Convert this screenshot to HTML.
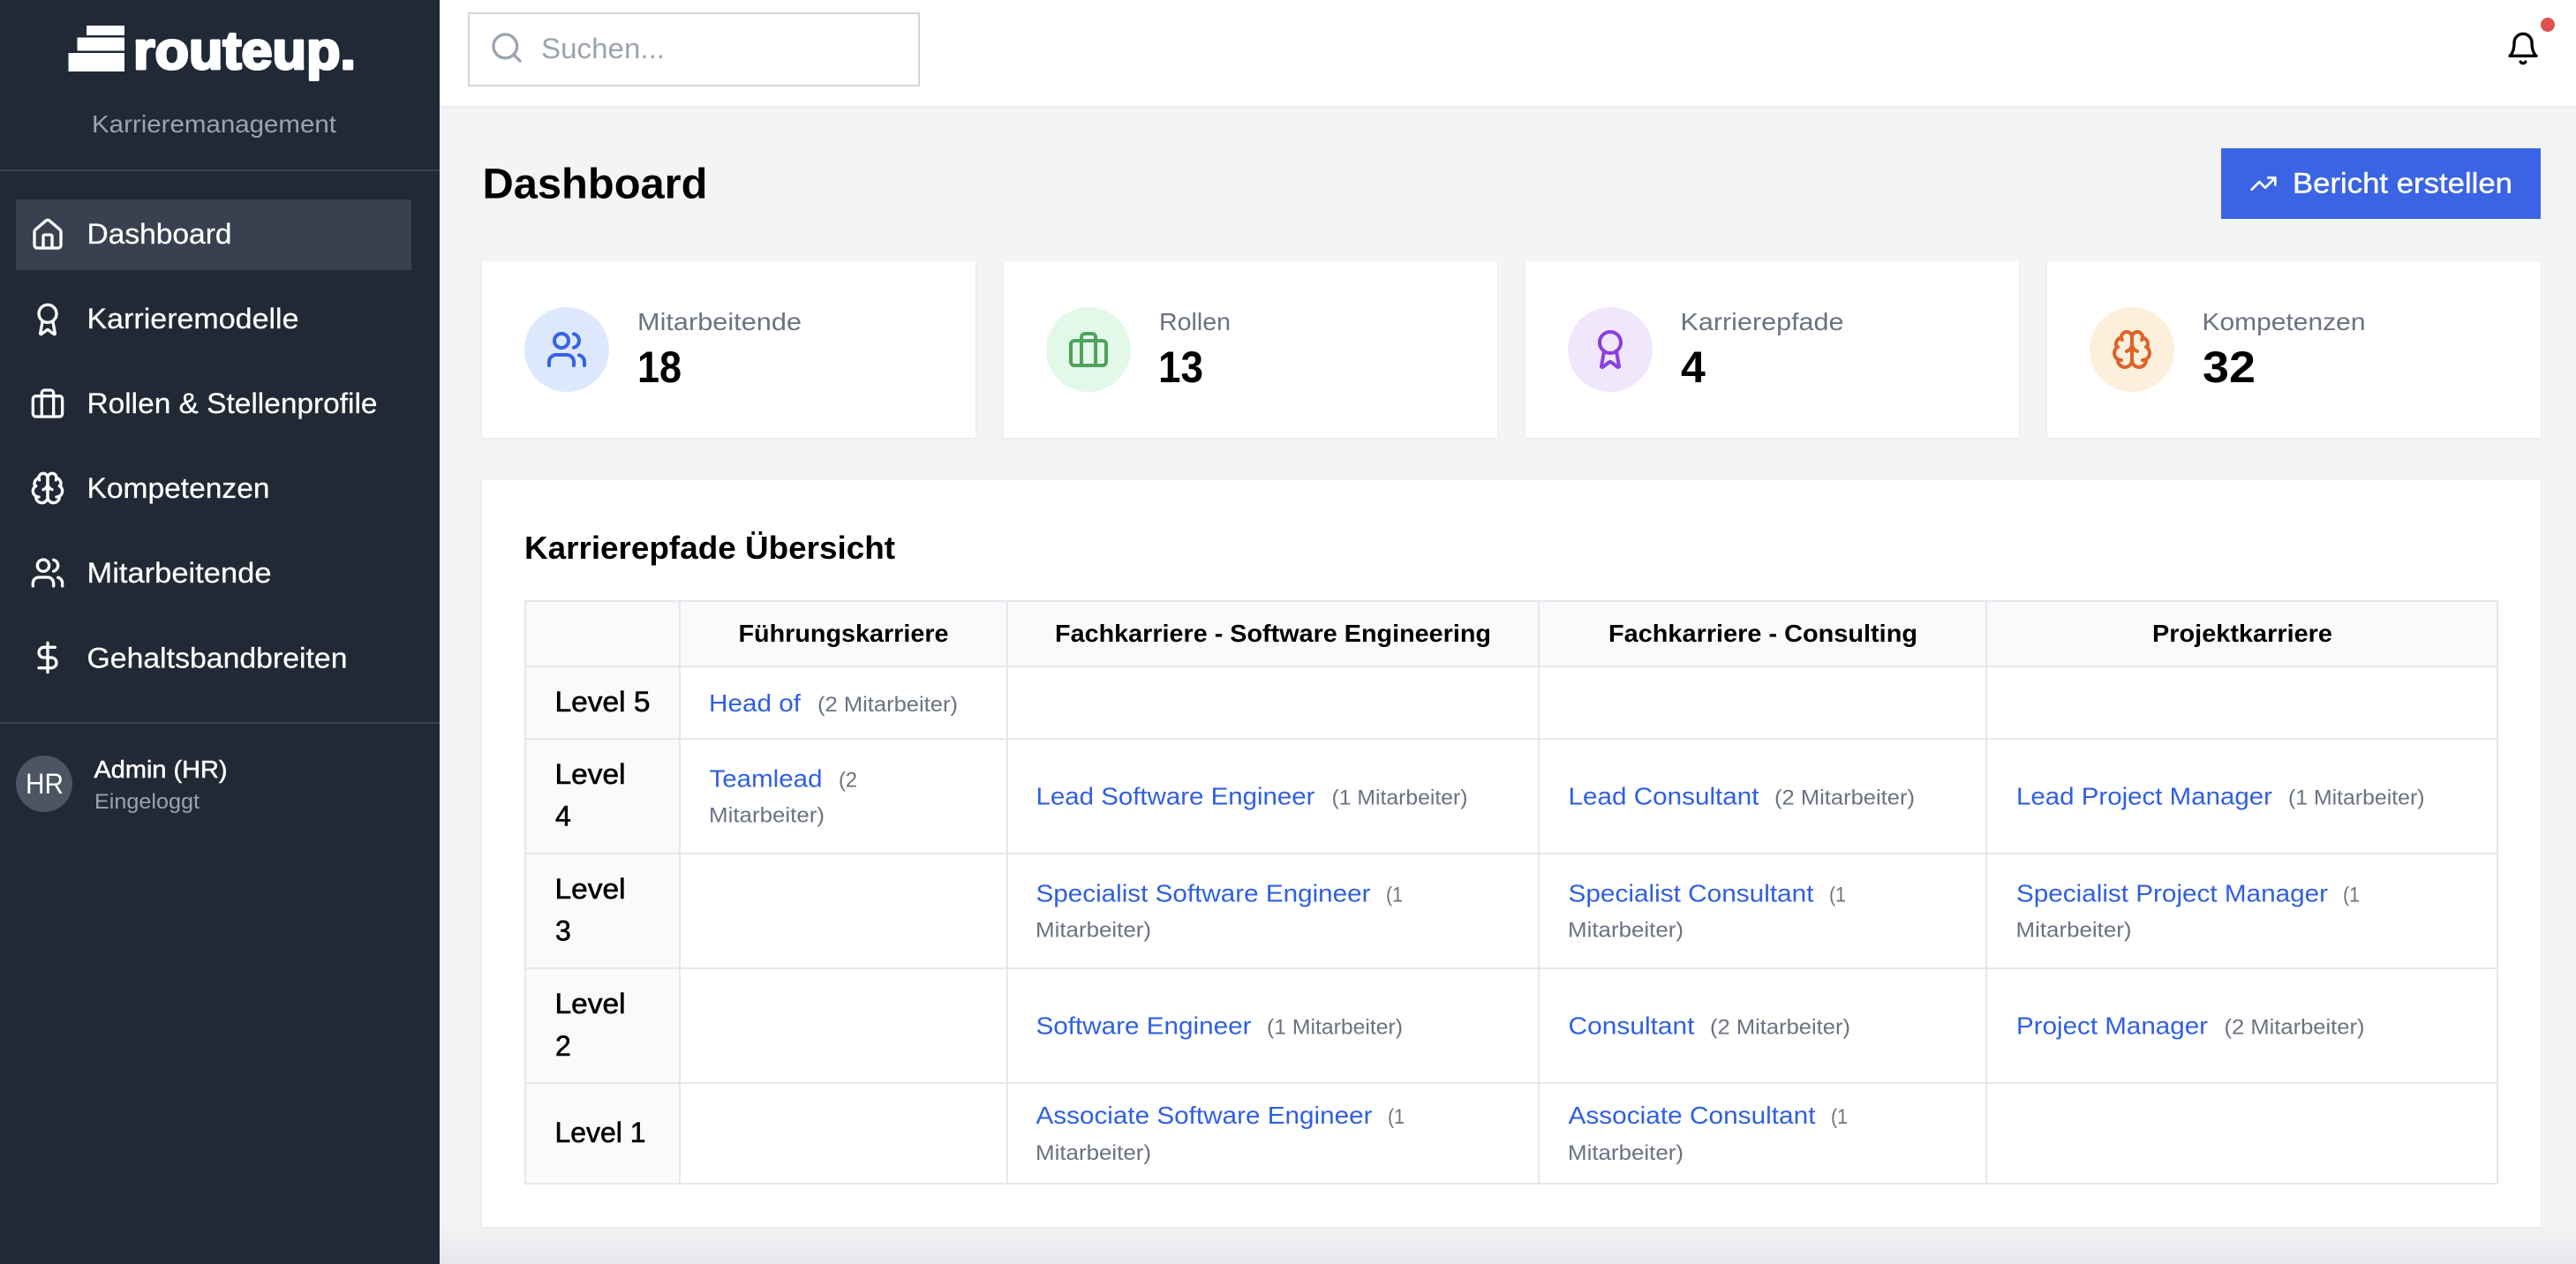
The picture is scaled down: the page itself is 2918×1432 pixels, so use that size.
<!DOCTYPE html>
<html lang="de">
<head>
<meta charset="utf-8">
<title>routeup. Dashboard</title>
<style>
html,body{margin:0;padding:0;width:2918px;height:1432px;overflow:hidden;background:#f3f4f6;}
#app{position:relative;width:2918px;height:1432px;overflow:hidden;background:#f3f4f6;}
.box{position:absolute;}
.side{left:0;top:0;width:498px;height:1432px;background:#212936;}
.head{left:498px;top:0;width:2420px;height:120px;background:#fff;box-shadow:0 1px 4px rgba(0,0,0,.06);}
.card{background:#fff;box-shadow:0 1px 3px rgba(0,0,0,.07);}
.bottom{left:498px;top:1388px;width:2420px;height:44px;background:linear-gradient(#f2f3f5,#e6e7ea);}
svg.layer{position:absolute;left:0;top:0;}
text{font-family:"Liberation Sans",Arial,sans-serif;}
.nav{font-size:32px;fill:#fff;stroke:#fff;stroke-width:.25px;}
.lab{font-size:28px;fill:#6b7280;}
.num{font-size:50px;font-weight:700;fill:#000;}
.th{font-size:28px;font-weight:700;fill:#000;}
.lv{font-size:32px;fill:#000;stroke:#000;stroke-width:.6px;}
.lk{font-size:28px;fill:#2f5fe3;}
.ct{font-size:24px;fill:#6b7280;}
.ic{fill:none;stroke-linecap:round;stroke-linejoin:round;}
</style>
</head>
<body>
<div id="app">
  <div class="box bottom"></div>
  <div class="box side"></div>
  <div class="box head"></div>
  <div class="box card" style="left:546px;top:296px;width:559px;height:200px"></div>
  <div class="box card" style="left:1137px;top:296px;width:559px;height:200px"></div>
  <div class="box card" style="left:1728px;top:296px;width:559px;height:200px"></div>
  <div class="box card" style="left:2319px;top:296px;width:559px;height:200px"></div>
  <div class="box card" style="left:546px;top:544px;width:2332px;height:846px"></div>

<svg class="layer" width="2918" height="1432" viewBox="0 0 2918 1432" xmlns="http://www.w3.org/2000/svg">
  <defs>
    <symbol id="i-house" viewBox="0 0 24 24"><path d="M15 21v-8a1 1 0 0 0-1-1h-4a1 1 0 0 0-1 1v8"/><path d="M3 10a2 2 0 0 1 .709-1.528l7-5.999a2 2 0 0 1 2.582 0l7 5.999A2 2 0 0 1 21 10v9a2 2 0 0 1-2 2H5a2 2 0 0 1-2-2z"/></symbol>
    <symbol id="i-award" viewBox="0 0 24 24"><path d="m15.477 12.89 1.515 8.526a.5.5 0 0 1-.81.47l-3.58-2.687a1 1 0 0 0-1.197 0l-3.586 2.686a.5.5 0 0 1-.81-.469l1.514-8.526"/><circle cx="12" cy="8" r="6"/></symbol>
    <symbol id="i-brief" viewBox="0 0 24 24"><rect x="2" y="7" width="20" height="14" rx="2" ry="2"/><path d="M16 21V5a2 2 0 0 0-2-2h-4a2 2 0 0 0-2 2v16"/></symbol>
    <symbol id="i-brain" viewBox="0 0 24 24"><path d="M12 5a3 3 0 1 0-5.997.125 4 4 0 0 0-2.526 5.77 4 4 0 0 0 .556 6.588A4 4 0 1 0 12 18Z"/><path d="M12 5a3 3 0 1 1 5.997.125 4 4 0 0 1 2.526 5.77 4 4 0 0 1-.556 6.588A4 4 0 1 1 12 18Z"/><path d="M15 13a4.5 4.5 0 0 1-3-4 4.5 4.5 0 0 1-3 4"/><path d="M17.599 6.5a3 3 0 0 0 .399-1.375"/><path d="M6.003 5.125A3 3 0 0 0 6.401 6.5"/><path d="M3.477 10.896a4 4 0 0 1 .585-.396"/><path d="M19.938 10.5a4 4 0 0 1 .585.396"/><path d="M6 18a4 4 0 0 1-1.967-.516"/><path d="M19.967 17.484A4 4 0 0 1 18 18"/></symbol>
    <symbol id="i-users" viewBox="0 0 24 24"><path d="M16 21v-2a4 4 0 0 0-4-4H6a4 4 0 0 0-4 4v2"/><circle cx="9" cy="7" r="4"/><path d="M22 21v-2a4 4 0 0 0-3-3.87"/><path d="M16 3.13a4 4 0 0 1 0 7.75"/></symbol>
    <symbol id="i-dollar" viewBox="0 0 24 24"><line x1="12" x2="12" y1="2" y2="22"/><path d="M17 5H9.5a3.5 3.5 0 0 0 0 7h5a3.5 3.5 0 0 1 0 7H6"/></symbol>
    <symbol id="i-search" viewBox="0 0 24 24"><circle cx="11" cy="11" r="8"/><path d="m21 21-4.3-4.3"/></symbol>
    <symbol id="i-bell" viewBox="0 0 24 24"><path d="M6 8a6 6 0 0 1 12 0c0 7 3 9 3 9H3s3-2 3-9"/><path d="M10.3 21a1.94 1.94 0 0 0 3.4 0"/></symbol>
    <symbol id="i-trend" viewBox="0 0 24 24"><polyline points="22 7 13.5 15.5 8.5 10.5 2 17"/><polyline points="16 7 22 7 22 13"/></symbol>
  </defs>

  <!-- Logo -->
  <rect x="98" y="29" width="43" height="11" fill="#fff"/>
  <rect x="87.5" y="42.500" width="53.5" height="15" fill="#fff"/>
  <rect x="77.5" y="60" width="63.5" height="21" fill="#fff"/>
  <text x="151" y="78" font-size="60" font-weight="700" fill="#fff" stroke="#fff" stroke-width="3" stroke-linejoin="round" textLength="252" lengthAdjust="spacingAndGlyphs">routeup.</text>
  <text x="104" y="150" font-size="28" fill="#9ca3af" textLength="277" lengthAdjust="spacingAndGlyphs">Karrieremanagement</text>
  <rect x="0" y="192" width="498" height="2" fill="#374151"/>

  <!-- Navigation -->
  <rect x="18" y="226" width="448" height="80" fill="#394150"/>
  <g class="ic" stroke="#fff" stroke-width="2">
    <use href="#i-house" x="34" y="246" width="40" height="40"/>
    <use href="#i-award" x="34" y="342" width="40" height="40"/>
    <use href="#i-brief" x="34" y="437" width="40" height="40"/>
    <use href="#i-brain" x="34" y="533" width="40" height="40"/>
    <use href="#i-users" x="34" y="629" width="40" height="40"/>
    <use href="#i-dollar" x="34" y="725" width="40" height="40"/>
  </g>
  <text class="nav" x="98.500" y="276" textLength="164" lengthAdjust="spacingAndGlyphs">Dashboard</text>
  <text class="nav" x="98.500" y="372" textLength="240" lengthAdjust="spacingAndGlyphs">Karrieremodelle</text>
  <text class="nav" x="98.500" y="468" textLength="329" lengthAdjust="spacingAndGlyphs">Rollen &amp; Stellenprofile</text>
  <text class="nav" x="98.500" y="564" textLength="207" lengthAdjust="spacingAndGlyphs">Kompetenzen</text>
  <text class="nav" x="98.500" y="660" textLength="209" lengthAdjust="spacingAndGlyphs">Mitarbeitende</text>
  <text class="nav" x="98.500" y="756.500" textLength="295" lengthAdjust="spacingAndGlyphs">Gehaltsbandbreiten</text>
  <rect x="0" y="818" width="498" height="2" fill="#374151"/>

  <circle cx="50" cy="888" r="32" fill="#4b5563"/>
  <text x="29" y="899" font-size="32" fill="#fff" textLength="43" lengthAdjust="spacingAndGlyphs">HR</text>
  <text x="106.500" y="881" font-size="28" fill="#fff" stroke="#fff" stroke-width=".5" textLength="151" lengthAdjust="spacingAndGlyphs">Admin (HR)</text>
  <text x="107" y="916" font-size="24" fill="#9ca3af" textLength="119" lengthAdjust="spacingAndGlyphs">Eingeloggt</text>

  <!-- Top bar -->
  <rect x="531" y="15" width="510" height="82" fill="#fff" stroke="#d1d5db" stroke-width="2"/>
  <use href="#i-search" x="554" y="34" width="40" height="40" class="ic" stroke="#9ca3af" stroke-width="2"/>
  <text x="613" y="66" font-size="32" fill="#9ca3af" textLength="140" lengthAdjust="spacingAndGlyphs">Suchen...</text>
  <use href="#i-bell" x="2838" y="35" width="40" height="40" class="ic" stroke="#000" stroke-width="2"/>
  <circle cx="2886" cy="28" r="8" fill="#e0524f"/>

  <!-- Page head -->
  <text x="546.500" y="224.500" font-size="48" font-weight="700" fill="#000" textLength="255" lengthAdjust="spacingAndGlyphs">Dashboard</text>
  <rect x="2516" y="168" width="362" height="80" fill="#3b64e4"/>
  <use href="#i-trend" x="2548" y="192" width="32" height="32" class="ic" stroke="#fff" stroke-width="2"/>
  <text x="2597" y="218.500" font-size="32" fill="#fff" stroke="#fff" stroke-width=".4" textLength="249" lengthAdjust="spacingAndGlyphs">Bericht erstellen</text>

  <!-- Stat cards -->
  <circle cx="642" cy="396" r="48" fill="#dde8fc"/>
  <circle cx="1233" cy="396" r="48" fill="#e2f9ea"/>
  <circle cx="1824" cy="396" r="48" fill="#f0e7fd"/>
  <circle cx="2415" cy="396" r="48" fill="#fdefdc"/>
  <use href="#i-users" x="618" y="372" width="48" height="48" class="ic" stroke="#3563e6" stroke-width="2"/>
  <use href="#i-brief" x="1209" y="372" width="48" height="48" class="ic" stroke="#4fa35a" stroke-width="2"/>
  <use href="#i-award" x="1800" y="372" width="48" height="48" class="ic" stroke="#8a3fe0" stroke-width="2"/>
  <use href="#i-brain" x="2391" y="372" width="48" height="48" class="ic" stroke="#dd6329" stroke-width="2"/>
  <text class="lab" x="722" y="374" textLength="186" lengthAdjust="spacingAndGlyphs">Mitarbeitende</text>
  <text class="lab" x="1313" y="374" textLength="81" lengthAdjust="spacingAndGlyphs">Rollen</text>
  <text class="lab" x="1903.500" y="374" textLength="185" lengthAdjust="spacingAndGlyphs">Karrierepfade</text>
  <text class="lab" x="2494.500" y="374" textLength="185" lengthAdjust="spacingAndGlyphs">Kompetenzen</text>
  <text class="num" x="722" y="433" textLength="50" lengthAdjust="spacingAndGlyphs">18</text>
  <text class="num" x="1312" y="433" textLength="51" lengthAdjust="spacingAndGlyphs">13</text>
  <text class="num" x="1904" y="433">4</text>
  <text class="num" x="2495" y="433" textLength="60" lengthAdjust="spacingAndGlyphs">32</text>

  <!-- Table card -->
  <text x="594" y="633" font-size="36" font-weight="700" fill="#000" textLength="420" lengthAdjust="spacingAndGlyphs">Karrierepfade Übersicht</text>

  <rect x="595" y="681" width="2234" height="74" fill="#f9fafb"/>
  <rect x="595" y="755" width="175" height="586" fill="#f9fafb"/>
  <g fill="#e5e7eb">
    <rect x="594" y="680" width="2236" height="2"/>
    <rect x="594" y="754" width="2236" height="2"/>
    <rect x="594" y="836" width="2236" height="2"/>
    <rect x="594" y="966" width="2236" height="2"/>
    <rect x="594" y="1096" width="2236" height="2"/>
    <rect x="594" y="1226" width="2236" height="2"/>
    <rect x="594" y="1340" width="2236" height="2"/>
    <rect x="594" y="680" width="2" height="662"/>
    <rect x="769" y="680" width="2" height="662"/>
    <rect x="1140" y="680" width="2" height="662"/>
    <rect x="1742" y="680" width="2" height="662"/>
    <rect x="2249" y="680" width="2" height="662"/>
    <rect x="2828" y="680" width="2" height="662"/>
  </g>

  <text class="th" x="836.500" y="727" textLength="238" lengthAdjust="spacingAndGlyphs">Führungskarriere</text>
  <text class="th" x="1195" y="727" textLength="494" lengthAdjust="spacingAndGlyphs">Fachkarriere - Software Engineering</text>
  <text class="th" x="1822" y="727" textLength="350" lengthAdjust="spacingAndGlyphs">Fachkarriere - Consulting</text>
  <text class="th" x="2438" y="727" textLength="204" lengthAdjust="spacingAndGlyphs">Projektkarriere</text>

  <text class="lv" x="628.500" y="806" textLength="108" lengthAdjust="spacingAndGlyphs">Level 5</text>
  <text class="lv" x="628.500" y="888" textLength="80" lengthAdjust="spacingAndGlyphs">Level</text><text class="lv" x="629" y="935.500">4</text>
  <text class="lv" x="628.500" y="1018" textLength="80" lengthAdjust="spacingAndGlyphs">Level</text><text class="lv" x="629" y="1065.500">3</text>
  <text class="lv" x="628.500" y="1148" textLength="80" lengthAdjust="spacingAndGlyphs">Level</text><text class="lv" x="629" y="1196">2</text>
  <text class="lv" x="628.500" y="1294" textLength="103" lengthAdjust="spacingAndGlyphs">Level 1</text>

  <!-- Column 1 -->
  <text class="lk" x="803" y="806" textLength="104" lengthAdjust="spacingAndGlyphs">Head of</text>
  <text class="ct" x="926" y="806" textLength="159" lengthAdjust="spacingAndGlyphs">(2 Mitarbeiter)</text>
  <text class="lk" x="803.500" y="891.500" textLength="128" lengthAdjust="spacingAndGlyphs">Teamlead</text>
  <text class="ct" x="950" y="891.500" textLength="21" lengthAdjust="spacingAndGlyphs">(2</text>
  <text class="ct" x="803" y="931.500" textLength="131" lengthAdjust="spacingAndGlyphs">Mitarbeiter)</text>

  <!-- Column 2 -->
  <text class="lk" x="1173.500" y="911.500" textLength="316" lengthAdjust="spacingAndGlyphs">Lead Software Engineer</text>
  <text class="ct" x="1508.500" y="911.500" textLength="154" lengthAdjust="spacingAndGlyphs">(1 Mitarbeiter)</text>
  <text class="lk" x="1173.500" y="1021.500" textLength="379" lengthAdjust="spacingAndGlyphs">Specialist Software Engineer</text>
  <text class="ct" x="1570" y="1021.500" textLength="19" lengthAdjust="spacingAndGlyphs">(1</text>
  <text class="ct" x="1173" y="1061.500" textLength="131" lengthAdjust="spacingAndGlyphs">Mitarbeiter)</text>
  <text class="lk" x="1173.500" y="1171.500" textLength="244" lengthAdjust="spacingAndGlyphs">Software Engineer</text>
  <text class="ct" x="1435" y="1171.500" textLength="154" lengthAdjust="spacingAndGlyphs">(1 Mitarbeiter)</text>
  <text class="lk" x="1173.500" y="1273" textLength="381" lengthAdjust="spacingAndGlyphs">Associate Software Engineer</text>
  <text class="ct" x="1572" y="1273" textLength="19" lengthAdjust="spacingAndGlyphs">(1</text>
  <text class="ct" x="1173" y="1314" textLength="131" lengthAdjust="spacingAndGlyphs">Mitarbeiter)</text>

  <!-- Column 3 -->
  <text class="lk" x="1776.500" y="911.500" textLength="216" lengthAdjust="spacingAndGlyphs">Lead Consultant</text>
  <text class="ct" x="2010" y="911.500" textLength="159" lengthAdjust="spacingAndGlyphs">(2 Mitarbeiter)</text>
  <text class="lk" x="1776.500" y="1021.500" textLength="278" lengthAdjust="spacingAndGlyphs">Specialist Consultant</text>
  <text class="ct" x="2072" y="1021.500" textLength="19" lengthAdjust="spacingAndGlyphs">(1</text>
  <text class="ct" x="1776" y="1061.500" textLength="131" lengthAdjust="spacingAndGlyphs">Mitarbeiter)</text>
  <text class="lk" x="1776.500" y="1171.500" textLength="143" lengthAdjust="spacingAndGlyphs">Consultant</text>
  <text class="ct" x="1937" y="1171.500" textLength="159" lengthAdjust="spacingAndGlyphs">(2 Mitarbeiter)</text>
  <text class="lk" x="1776.500" y="1273" textLength="280" lengthAdjust="spacingAndGlyphs">Associate Consultant</text>
  <text class="ct" x="2074" y="1273" textLength="19" lengthAdjust="spacingAndGlyphs">(1</text>
  <text class="ct" x="1776" y="1314" textLength="131" lengthAdjust="spacingAndGlyphs">Mitarbeiter)</text>

  <!-- Column 4 -->
  <text class="lk" x="2284" y="911.500" textLength="290" lengthAdjust="spacingAndGlyphs">Lead Project Manager</text>
  <text class="ct" x="2592" y="911.500" textLength="154.500" lengthAdjust="spacingAndGlyphs">(1 Mitarbeiter)</text>
  <text class="lk" x="2284" y="1021.500" textLength="353" lengthAdjust="spacingAndGlyphs">Specialist Project Manager</text>
  <text class="ct" x="2654" y="1021.500" textLength="19" lengthAdjust="spacingAndGlyphs">(1</text>
  <text class="ct" x="2283.500" y="1061.500" textLength="131" lengthAdjust="spacingAndGlyphs">Mitarbeiter)</text>
  <text class="lk" x="2284" y="1171.500" textLength="217" lengthAdjust="spacingAndGlyphs">Project Manager</text>
  <text class="ct" x="2519.500" y="1171.500" textLength="159" lengthAdjust="spacingAndGlyphs">(2 Mitarbeiter)</text>
</svg>
</div>
</body>
</html>
